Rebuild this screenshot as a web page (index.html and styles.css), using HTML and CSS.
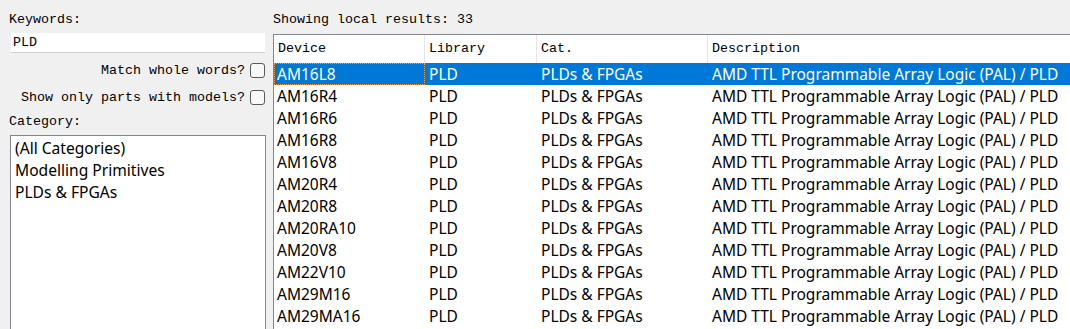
FILE: index.html
```html
<!DOCTYPE html>
<html>
<head>
<meta charset="utf-8">
<link rel="stylesheet" href="styles.css">
</head>
<body>
<div class="app">
  <div class="side">
    <div class="label">Keywords:</div>
    <div class="input">PLD</div>
    <div class="check-row"><span>Match whole words?</span><span class="box"></span></div>
    <div class="check-row second"><span>Show only parts with models?</span><span class="box"></span></div>
    <div class="label cat">Category:</div>
    <div class="listbox">
      <div class="item">(All Categories)</div>
      <div class="item">Modelling Primitives</div>
      <div class="item">PLDs &amp; FPGAs</div>
    </div>
  </div>
  <div class="main">
    <div class="label">Showing local results: 33</div>
    <div class="table">
      <div class="row head">
        <div class="c c1">Device</div>
        <div class="c c2">Library</div>
        <div class="c c3">Cat.</div>
        <div class="c c4">Description</div>
      </div>
      <div class="row sel">
        <div class="c c1"><span class="focus">AM16L8</span></div>
        <div class="c c2">PLD</div>
        <div class="c c3">PLDs &amp; FPGAs</div>
        <div class="c c4">AMD TTL Programmable Array Logic (PAL) / PLD</div>
      </div>
      <div class="row"><div class="c c1">AM16R4</div><div class="c c2">PLD</div><div class="c c3">PLDs &amp; FPGAs</div><div class="c c4">AMD TTL Programmable Array Logic (PAL) / PLD</div></div>
      <div class="row"><div class="c c1">AM16R6</div><div class="c c2">PLD</div><div class="c c3">PLDs &amp; FPGAs</div><div class="c c4">AMD TTL Programmable Array Logic (PAL) / PLD</div></div>
      <div class="row"><div class="c c1">AM16R8</div><div class="c c2">PLD</div><div class="c c3">PLDs &amp; FPGAs</div><div class="c c4">AMD TTL Programmable Array Logic (PAL) / PLD</div></div>
      <div class="row"><div class="c c1">AM16V8</div><div class="c c2">PLD</div><div class="c c3">PLDs &amp; FPGAs</div><div class="c c4">AMD TTL Programmable Array Logic (PAL) / PLD</div></div>
      <div class="row"><div class="c c1">AM20R4</div><div class="c c2">PLD</div><div class="c c3">PLDs &amp; FPGAs</div><div class="c c4">AMD TTL Programmable Array Logic (PAL) / PLD</div></div>
      <div class="row"><div class="c c1">AM20R8</div><div class="c c2">PLD</div><div class="c c3">PLDs &amp; FPGAs</div><div class="c c4">AMD TTL Programmable Array Logic (PAL) / PLD</div></div>
      <div class="row"><div class="c c1">AM20RA10</div><div class="c c2">PLD</div><div class="c c3">PLDs &amp; FPGAs</div><div class="c c4">AMD TTL Programmable Array Logic (PAL) / PLD</div></div>
      <div class="row"><div class="c c1">AM20V8</div><div class="c c2">PLD</div><div class="c c3">PLDs &amp; FPGAs</div><div class="c c4">AMD TTL Programmable Array Logic (PAL) / PLD</div></div>
      <div class="row"><div class="c c1">AM22V10</div><div class="c c2">PLD</div><div class="c c3">PLDs &amp; FPGAs</div><div class="c c4">AMD TTL Programmable Array Logic (PAL) / PLD</div></div>
      <div class="row"><div class="c c1">AM29M16</div><div class="c c2">PLD</div><div class="c c3">PLDs &amp; FPGAs</div><div class="c c4">AMD TTL Programmable Array Logic (PAL) / PLD</div></div>
      <div class="row"><div class="c c1">AM29MA16</div><div class="c c2">PLD</div><div class="c c3">PLDs &amp; FPGAs</div><div class="c c4">AMD TTL Programmable Array Logic (PAL) / PLD</div></div>
    </div>
  </div>
</div>
</body>
</html>
```

FILE: styles.css
```css
html, body {
  margin: 0;
  padding: 0;
  background: #f0f0f0;
  overflow: hidden;
  height: 329px;
}
.app {
  display: flex;
  height: 329px;
  overflow: hidden;
}
.side {
  width: 256px;
  margin-left: 10px;
  display: flex;
  flex-direction: column;
  flex: none;
}
.label {
  font-family: "Liberation Mono", monospace;
  font-size: 13.33px;
  color: #000;
  height: 18px;
  line-height: 18px;
  margin-top: 11px;
  margin-left: -1px;
}
.input {
  margin-top: 4px;
  height: 19px;
  background: #fff;
  border-bottom: 1px solid #d0d0d0;
  font-family: "Liberation Mono", monospace;
  font-size: 13.33px;
  line-height: 19px;
  padding-left: 2px;
  width: 252px;
  margin-left: 1px;
}
.check-row {
  display: flex;
  justify-content: flex-end;
  align-items: center;
  gap: 5px;
  height: 17px;
  margin-top: 9px;
  font-family: "Liberation Mono", monospace;
  font-size: 13.33px;
  padding-right: 1px;
}
.check-row.second {
  margin-top: 10px;
}
.box {
  width: 13px;
  height: 13px;
  border: 1px solid #5a5a5a;
  border-radius: 3px;
  background: #f8f8f8;
  flex: none;
}
.label.cat {
  margin-top: 7px;
}
.listbox {
  margin-top: 4px;
  flex: 1;
  background: #fff;
  border: 1px solid #828790;
  border-bottom: none;
  padding-top: 1px;
}
.item {
  font-family: "Noto Sans", sans-serif;
  font-size: 15.6px;
  height: 22px;
  line-height: 22px;
  padding-left: 4px;
  color: #000;
}
.main {
  margin-left: 7px;
  flex: 1;
  display: flex;
  flex-direction: column;
  min-width: 0;
}
.main .label {
  margin-left: 0;
}
.table {
  margin-top: 5px;
  flex: 1;
  background: #fff;
  border-left: 1px solid #828790;
  border-top: 1px solid #828790;
  overflow: hidden;
}
.row {
  display: flex;
  height: 22px;
  line-height: 22px;
  font-family: "Noto Sans", sans-serif;
  font-size: 15.5px;
  color: #000;
  white-space: nowrap;
}
.row.head {
  height: 28px;
  line-height: 27px;
  font-family: "Liberation Mono", monospace;
  font-size: 13.33px;
}
.row.head .c {
  border-right: 1px solid #e5e5e5;
  padding-left: 4px;
}
.row.head .c1 { padding-left: 4px; }
.c {
  flex: none;
  padding-left: 4px;
  box-sizing: border-box;
}
.c1 { width: 151px; padding-left: 3px; }
.c2 { width: 112px; }
.c3 { width: 171px; }
.c4 { width: 400px; }
.row.sel {
  background: #0078d7;
  color: #fff;
}
.row.sel .c1 {
  padding-left: 0;
}
.focus {
  display: block;
  height: 22px;
  box-sizing: border-box;
  border: 1px dotted #f0a040;
  padding-left: 2px;
  line-height: 20px;
}
```
